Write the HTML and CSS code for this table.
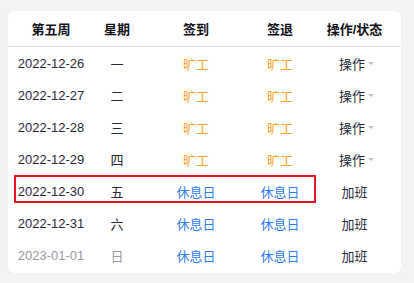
FILE: index.html
```html
<!DOCTYPE html>
<html lang="zh">
<head>
<meta charset="utf-8">
<link rel="stylesheet" href="styles.css">
</head>
<body>
<div class="card">
  <table class="sheet">
    <colgroup>
      <col class="c1"><col class="c2"><col class="c3"><col class="c4"><col class="c5">
    </colgroup>
    <thead>
      <tr><th>第五周</th><th>星期</th><th>签到</th><th>签退</th><th>操作/状态</th></tr>
    </thead>
    <tbody>
      <tr><td>2022-12-26</td><td>一</td><td class="absent">旷工</td><td class="absent">旷工</td><td><span class="op">操作<i class="caret"></i></span></td></tr>
      <tr><td>2022-12-27</td><td>二</td><td class="absent">旷工</td><td class="absent">旷工</td><td><span class="op">操作<i class="caret"></i></span></td></tr>
      <tr><td>2022-12-28</td><td>三</td><td class="absent">旷工</td><td class="absent">旷工</td><td><span class="op">操作<i class="caret"></i></span></td></tr>
      <tr><td>2022-12-29</td><td>四</td><td class="absent">旷工</td><td class="absent">旷工</td><td><span class="op">操作<i class="caret"></i></span></td></tr>
      <tr><td>2022-12-30</td><td>五</td><td class="rest">休息日</td><td class="rest">休息日</td><td>加班</td></tr>
      <tr><td>2022-12-31</td><td>六</td><td class="rest">休息日</td><td class="rest">休息日</td><td>加班</td></tr>
      <tr class="future"><td>2023-01-01</td><td>日</td><td class="rest">休息日</td><td class="rest">休息日</td><td>加班</td></tr>
    </tbody>
  </table>
  <div class="highlight"></div>
</div>
</body>
</html>
```
FILE: styles.css
```css
html, body {
  margin: 0;
  background: #f2f3f5;
}
body {
  padding: 11px 13px 0 8px;
  font-family: "Liberation Sans", "Noto Sans CJK SC", sans-serif;
  font-size: 13px;
  color: #272b38;
}
.card {
  position: relative;
  width: 393px;
  background: #fff;
  border-radius: 6px;
  padding-bottom: 2px;
  box-shadow: 0 1px 2px rgba(0, 0, 0, 0.04);
}
.sheet {
  width: 393px;
  border-collapse: collapse;
  table-layout: fixed;
}
.c1 { width: 86px; }
.c2 { width: 46px; }
.c3 { width: 112px; }
.c4 { width: 56px; }
.c5 { width: 93px; }
th {
  height: 35px;
  font-weight: bold;
  color: #111318;
  text-align: center;
  padding: 0;
  border-bottom: 1px solid #e3e4e8;
}
td {
  height: 32px;
  padding: 0;
  text-align: center;
  white-space: nowrap;
}
.absent { color: #f5a42a; }
.rest { color: #2f7cf2; }
.future td:first-child,
.future td:nth-child(2) { color: #9a9a9e; }
.op {
  display: inline-flex;
  align-items: center;
  gap: 3px;
  margin-left: 4px;
}
.caret {
  width: 0;
  height: 0;
  border-left: 3.5px solid transparent;
  border-right: 3.5px solid transparent;
  border-top: 3.5px solid #c2c4c8;
  margin-top: 1px;
}
.highlight {
  position: absolute;
  left: 6px;
  top: 164px;
  width: 298px;
  height: 24px;
  border: 2px solid #e01822;
  pointer-events: none;
}
```
